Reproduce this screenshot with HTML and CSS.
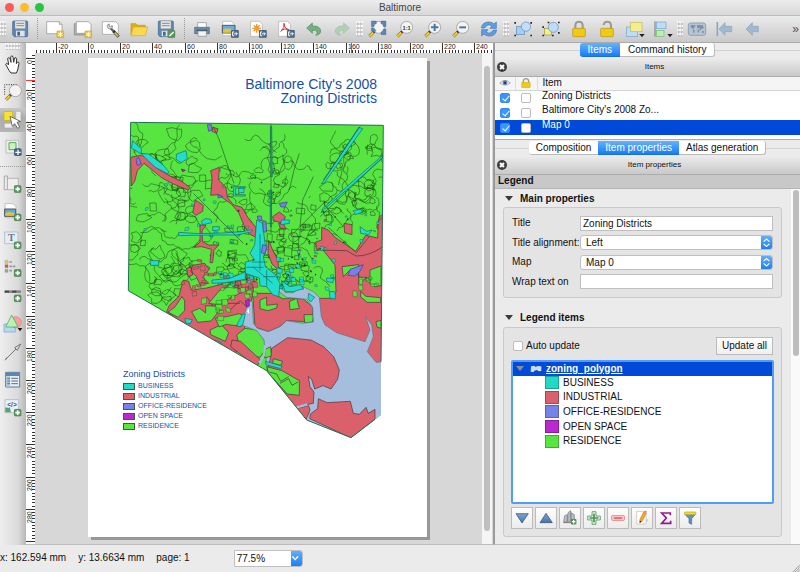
FILE: index.html
```html
<!DOCTYPE html>
<html lang="en">
<head>
<meta charset="utf-8">
<title>Baltimore</title>
<link rel="stylesheet" href="styles.css">
</head>
<body>
<svg class="defs" aria-hidden="true">
  <defs>
    <linearGradient id="steel" x1="0" y1="0" x2="0" y2="1"><stop offset="0" stop-color="#7da6cf"/><stop offset="1" stop-color="#4674a8"/></linearGradient>
    <symbol id="plus" viewBox="0 0 24 24"><rect x="1" y="1" width="22" height="22" rx="5" fill="#5b9460" stroke="#3f7546"/><path d="M12 5v14M5 12h14" stroke="#fff" stroke-width="5"/></symbol>
    <symbol id="star" viewBox="0 0 24 24"><rect x="1" y="1" width="22" height="22" rx="4" fill="#e3bd2c" stroke="#c49c17"/><path d="M12 4v16M5 8l14 8M19 8L5 16" stroke="#fff" stroke-width="3"/></symbol>
    <symbol id="export" viewBox="0 0 26 26"><rect x="1" y="1" width="24" height="24" rx="4" fill="#4d6a84" stroke="#36516a"/><path d="M11 7H6v12h5M10 13h10M16 8l5 5-5 5" fill="none" stroke="#fff" stroke-width="3"/></symbol>
    <symbol id="lens" viewBox="0 0 60 60"><path d="M20 39L7 52" stroke="#8a6d10" stroke-width="9"/><path d="M19 40L7 52" stroke="#f2cf35" stroke-width="6"/><path d="M24 35l-5 5" stroke="#333" stroke-width="8"/><circle cx="35" cy="25" r="18" fill="#f3f3f1" stroke="#8b8b8b" stroke-width="2"/></symbol>
    <symbol id="floppy" viewBox="0 0 60 60"><path d="M8 9q0-3 3-3h39q3 0 3 3v41q0 3-3 3H13l-5-5z" fill="#5f87b0" stroke="#3d6288" stroke-width="2"/><path d="M15 6h31v23H15z" fill="#e6e6e6" stroke="#888"/><path d="M19 13h23M19 20h23" stroke="#8c8c8c" stroke-width="3"/><path d="M18 35h26v17H18z" fill="#dfe3e8"/><path d="M22 38h8v12h-8z" fill="#45698e"/></symbol>
  </defs>
</svg>

<header class="titlebar">
  <div class="lights"><button class="light red" aria-label="Close"></button><button class="light amber" aria-label="Minimize"></button><button class="light green" aria-label="Zoom"></button></div>
  <h1>Baltimore</h1>
</header>

<nav class="toolbar" aria-label="Composer">
  <span class="grip first"></span>
  <button aria-label="Save"><svg viewBox="0 0 60 60"><use href="#floppy"/></svg></button>
  <span class="sep"></span>
  <button aria-label="New"><svg viewBox="0 0 60 60"><path d="M5 8h38l8 8v28H5z" fill="#fff" stroke="#8d8d8d" stroke-width="2"/><path d="M43 8v8h8" fill="#ddd" stroke="#8d8d8d" stroke-width="2"/><use href="#star" x="34" y="34" width="24" height="24"/></svg></button>
  <button aria-label="Duplicate"><svg viewBox="0 0 60 60"><path d="M4 14h44v34H4z" fill="#b5b5b5" stroke="#7d7d7d" stroke-width="2"/><path d="M10 8h36l8 8v27H10z" fill="#fff" stroke="#8d8d8d" stroke-width="2"/><use href="#star" x="34" y="34" width="24" height="24"/></svg></button>
  <button aria-label="Manage"><svg viewBox="0 0 60 60"><path d="M4 8h40l8 8v30H4z" fill="#fff" stroke="#999" stroke-width="2"/><path d="M28 27l11 11" stroke="#666" stroke-width="7"/><path d="M19 19q1-4 6-4l-1 6 5 3 4-5q4 6-2 10-7 2-11-3-2-3-1-7z" fill="#ddd" stroke="#666" stroke-width="2"/><path d="M37 36l16 17" stroke="#333" stroke-width="9"/><path d="M41 41l11 11" stroke="#e3c22f" stroke-width="5"/></svg></button>
  <button aria-label="Open"><svg viewBox="0 0 60 60"><path d="M6 48V14h15l4 5h24v9" fill="#dcae19" stroke="#c99812" stroke-width="2"/><path d="M6 50l7-26h43l-7 26z" fill="#f8d951" stroke="#dba91c" stroke-width="2"/></svg></button>
  <button aria-label="Save as template"><svg viewBox="0 0 60 60"><use href="#floppy" x="-4"/><rect x="32" y="34" width="22" height="22" rx="4" fill="#5b9460" stroke="#3f7546"/><path d="M37 51l13-12" stroke="#fff" stroke-width="4"/></svg></button>
  <span class="sep"></span>
  <button aria-label="Print"><svg viewBox="0 0 60 60"><path d="M17 11h26v16H17z" fill="#fff" stroke="#888" stroke-width="2"/><path d="M8 25h44v19H8z" fill="#6f8ca6" stroke="#49637b" stroke-width="2"/><path d="M14 34h32" stroke="#35516b" stroke-width="4"/><path d="M18 36h25v16H18z" fill="#f3f3f3" stroke="#888" stroke-width="2"/></svg></button>
  <button aria-label="Export as image"><svg viewBox="0 0 60 60"><path d="M8 7h26l9 9v34H8z" fill="#fff" stroke="#aaa" stroke-width="2"/><path d="M7 19h38v23H7z" fill="#69aee2" stroke="#555" stroke-width="3"/><path d="M9 32q14-8 34 2v7H9z" fill="#e4c33a"/><use href="#export" x="32" y="32" width="25" height="25"/></svg></button>
  <button aria-label="Export as SVG"><svg viewBox="0 0 60 60"><path d="M8 7h26l9 9v36H8z" fill="#fff" stroke="#aaa" stroke-width="2"/><g stroke="#ee9b36" stroke-width="4"><path d="M26 15v26M13 28h26M17 19l18 18M35 19L17 37"/><circle cx="26" cy="28" r="5" fill="#ee9b36"/></g><use href="#export" x="32" y="32" width="25" height="25"/></svg></button>
  <button aria-label="Export as PDF"><svg viewBox="0 0 60 60"><path d="M8 7h26l9 9v36H8z" fill="#fff" stroke="#aaa" stroke-width="2"/><path d="M24 12q4 13-10 26M24 14q1 16 16 18M16 34q9-7 22-2" fill="none" stroke="#d6302e" stroke-width="3"/><use href="#export" x="32" y="32" width="25" height="25"/></svg></button>
  <button aria-label="Undo"><svg viewBox="0 0 60 60"><path d="M8 27L25 12v9q24-1 25 15 0 11-15 13 6-6 4-11-3-5-14-4v9z" fill="#77ad80" stroke="#4f9160" stroke-width="2"/></svg></button>
  <button aria-label="Redo"><svg viewBox="0 0 60 60"><path d="M52 27L35 12v9q-24-1-25 15 0 11 15 13-6-6-4-11 3-5 14-4v9z" fill="#b2d0b7" stroke="#9cc0a3" stroke-width="2"/></svg></button>
  <span class="grip"></span>
  <button aria-label="Zoom full"><svg viewBox="0 0 60 60"><use href="#lens"/><g fill="#5b85b2" stroke="#3f6793"><path d="M13 6h15v8l-5 2-2 7h-8zM57 6H42v8l5 2 2 7h8zM57 47H42v-8l5-2 2-7h8zM13 36v-9h8l6 8-4 4z"/></g></svg></button>
  <button aria-label="Zoom to 100%"><svg viewBox="0 0 60 60"><use href="#lens"/><text x="35" y="32" class="one">1:1</text></svg></button>
  <button aria-label="Zoom in"><svg viewBox="0 0 60 60"><use href="#lens"/><path d="M35 14v22M24 25h22" stroke="#4676ab" stroke-width="6"/></svg></button>
  <button aria-label="Zoom out"><svg viewBox="0 0 60 60"><use href="#lens"/><path d="M25 25h20" stroke="#4676ab" stroke-width="6"/></svg></button>
  <button aria-label="Refresh"><svg viewBox="0 0 60 60"><path d="M7 27q3-19 24-18 9 1 14 6l7-6v19H33l6-7q-14-9-22 6zM53 33q-3 19-24 18-9-1-14-6l-7 6V32h19l-6 7q14 9 22-6z" fill="#609ce0" stroke="#3978bd" stroke-width="2"/></svg></button>
  <span class="grip narrow"></span>
  <button aria-label="Group"><svg viewBox="0 0 60 60"><rect x="10" y="23" width="24" height="24" fill="#a9cdf1" stroke="#5d8bb9" stroke-width="2"/><circle cx="39" cy="23" r="14" fill="#c3def7" stroke="#5d8bb9" stroke-width="2"/><path d="M4 9h5v5H4zM52 9h5v5h-5zM4 47h5v5H4zM52 47h5v5h-5z" fill="#222"/></svg></button>
  <button aria-label="Ungroup"><svg viewBox="0 0 60 60"><rect x="10" y="28" width="22" height="20" fill="#f4ee91" stroke="#989344" stroke-width="2"/><circle cx="37" cy="25" r="15" fill="#bcdcf7" stroke="#5d8bb9" stroke-width="2"/><path d="M4 22h5v5H4zM4 47h5v5H4zM33 47h5v5h-5zM20 8h5v5h-5zM51 8h5v5h-5zM51 39h5v5h-5z" fill="#222"/></svg></button>
  <button aria-label="Lock"><svg viewBox="0 0 60 60"><path d="M19 30V18q1-10 11-10t11 10v12" fill="none" stroke="#999" stroke-width="6"/><rect x="11" y="28" width="38" height="25" rx="3" fill="#f0cb15" stroke="#b98f0b" stroke-width="2"/></svg></button>
  <button aria-label="Unlock"><svg viewBox="0 0 60 60"><path d="M20 18q1-10 11-10t11 10v12" fill="none" stroke="#999" stroke-width="6"/><rect x="11" y="28" width="38" height="25" rx="3" fill="#f0cb15" stroke="#b98f0b" stroke-width="2"/></svg></button>
  <button aria-label="Raise"><svg viewBox="0 0 60 60"><rect x="4" y="24" width="34" height="28" fill="#bcdcf7" stroke="#7ba2c7" stroke-width="2"/><rect x="17" y="10" width="34" height="28" fill="#f4ee91" stroke="#c1ba50" stroke-width="2"/><path d="M43 45h16l-8 10z" fill="#222"/></svg></button>
  <button aria-label="Align"><svg viewBox="0 0 60 60"><path d="M6 7v46" stroke="#777" stroke-width="3"/><rect x="10" y="9" width="29" height="20" fill="#bcdcf7" stroke="#7ba2c7" stroke-width="2"/><rect x="10" y="34" width="23" height="18" fill="#b7f0b4" stroke="#78b975" stroke-width="2"/><path d="M43 45h16l-8 10z" fill="#222"/></svg></button>
  <span class="grip narrow"></span>
  <button aria-label="Preview atlas"><svg viewBox="0 0 60 60"><rect x="4" y="12" width="52" height="37" rx="7" fill="#b4c4d3" stroke="#8fa2b5" stroke-width="3"/><path d="M11 18l15 1-5 8-3 4-7-7zM18 32l5 1-2 10-3-3zM30 18l18 1 2 9-6 1-3 5-4-6-7-2zM32 30l6 3-3 9-3-3zM45 36l6 1-1 5-5-1z" fill="#7e90a3"/></svg></button>
  <button aria-label="First feature"><svg viewBox="0 0 60 60"><path d="M7 9v42" stroke="#8fa6bd" stroke-width="5"/><path d="M12 30l18-19v11h20v16H30v11z" fill="#a0b9d1" stroke="#8aa4be" stroke-width="2"/></svg></button>
  <button aria-label="Previous feature"><svg viewBox="0 0 60 60"><path d="M9 30l19-19v11h18v16H28v11z" fill="#a0b9d1" stroke="#8aa4be" stroke-width="2"/></svg></button>
  <button class="more" aria-label="More tools">»</button>
</nav>

<main class="work">
  <nav class="tools" aria-label="Items toolbar">
    <span class="grip wide"></span>
    <button aria-label="Pan"><svg viewBox="0 0 60 60"><path d="M18 49L8 31q2-6 9 1l-3-19q4-5 7 1l3 11-1-17q4-5 7 0l2 17 3-13q5-3 6 2l-1 15 3-5q5-1 5 4l-4 20-4 9H24z" fill="#fff" stroke="#333" stroke-width="3" stroke-linejoin="round"/></svg></button>
    <button aria-label="Zoom"><svg viewBox="0 0 60 60"><path d="M5 38V8h38" fill="none" stroke="#333" stroke-width="3" stroke-dasharray="3 4"/><use href="#lens" x="2" y="1"/></svg></button>
    <button class="active" aria-label="Select item"><svg viewBox="0 0 60 60"><rect x="3" y="5" width="26" height="26" fill="#f8e232" stroke="#c9b113" stroke-width="2"/><path d="M38 4h16v30H38zM4 40h26v14H4z" fill="#eee" stroke="#aaa" stroke-width="2"/><path d="M21 19l7 30 7-8 9 14 6-4-8-14 10-3z" fill="#fff" stroke="#333" stroke-width="2"/></svg></button>
    <button aria-label="Move content"><svg viewBox="0 0 60 60"><path d="M9 7h38v38H9z" fill="#eee" stroke="#aaa" stroke-width="2"/><path d="M18 14h21v21H18z" fill="#c7f6bd" stroke="#58a852" stroke-width="3"/><rect x="33" y="31" width="23" height="23" rx="5" fill="#426587"/><path d="M45 35v16M37 43h16" stroke="#fff" stroke-width="4"/></svg></button>
    <span class="sep"></span>
    <button aria-label="Add map"><svg viewBox="0 0 60 60"><path d="M13 13h33v34H15" fill="#eee" stroke="#999" stroke-width="2"/><path d="M4 6h9v41H4q-2 0 0-5z" fill="#eee" stroke="#888" stroke-width="2"/><use href="#plus" x="32" y="33" width="24" height="24"/></svg></button>
    <button aria-label="Add image"><svg viewBox="0 0 60 60"><path d="M6 5h24l9 9v33H6z" fill="#fff" stroke="#aaa" stroke-width="2"/><path d="M5 21h33v22H5z" fill="#5eabe2" stroke="#555" stroke-width="3"/><path d="M7 34q12-8 30 1v6H7z" fill="#e4c33a"/><use href="#plus" x="32" y="34" width="24" height="24"/></svg></button>
    <button aria-label="Add label"><svg viewBox="0 0 60 60"><path d="M5 6h40v35H5z" fill="#e5edf4" stroke="#9fadb9" stroke-width="2"/><text x="25" y="34" class="tee">T</text><use href="#plus" x="32" y="34" width="24" height="24"/></svg></button>
    <button aria-label="Add legend"><svg viewBox="0 0 60 60"><path d="M6 7h9v9H6z" fill="#ead435" stroke="#888"/><path d="M6 20h9v9H6z" fill="#db4e55" stroke="#888"/><path d="M6 34h9v9H6z" fill="#81b77d" stroke="#888"/><path d="M19 12h10M19 25h18M19 38h10" stroke="#999" stroke-width="5" stroke-dasharray="8 2"/><use href="#plus" x="32" y="33" width="24" height="24"/></svg></button>
    <button aria-label="Add scalebar"><svg viewBox="0 0 60 60"><path d="M4 13h50v8H4z" fill="#888"/><path d="M6 17h12M28 17h12" stroke="#444" stroke-width="5"/><use href="#plus" x="32" y="25" width="24" height="24"/></svg></button>
    <button aria-label="Add shape"><svg viewBox="0 0 60 60"><path d="M3 30h34v24H3z" fill="#b5d8f7" stroke="#78a3c7" stroke-width="2"/><circle cx="38" cy="25" r="17" fill="#f3a1a1" stroke="#d77" stroke-width="2"/><path d="M26 3L8 39h37z" fill="#baf0b5" stroke="#4e9f49" stroke-width="2"/><path d="M44 42h14l-7 10z" fill="#111"/></svg></button>
    <button aria-label="Add arrow"><svg viewBox="0 0 60 60"><path d="M8 52L42 18" stroke="#777" stroke-width="3"/><path d="M4 56l6-10 3 4z" fill="#777"/><path d="M53 6L35 17l8 8z" fill="#ddd" stroke="#777" stroke-width="3"/></svg></button>
    <button aria-label="Add attribute table"><svg viewBox="0 0 60 60"><path d="M8 7h42v44H8z" fill="#e8eef4" stroke="#557c9d" stroke-width="3"/><path d="M9 8h40v10H9z" fill="#5d86ab"/><path d="M9 19h12v31H9z" fill="#b0c7da"/><path d="M13 25h8M25 25h20M13 33h8M25 33h20M13 41h8M25 41h20" stroke="#58718a" stroke-width="3"/></svg></button>
    <button aria-label="Add HTML frame"><svg viewBox="0 0 60 60"><path d="M6 5h41v39H6z" fill="#eaf0f5" stroke="#9fadb9" stroke-width="2"/><path d="M7 29q13-3 17 14H7z" fill="#56a65f"/><path d="M12 35l8-8 3 10z" fill="#568fd2"/><text x="27" y="26" class="code">&lt;/&gt;</text><use href="#plus" x="32" y="32" width="24" height="24"/></svg></button>
  </nav>

  <section class="view" aria-label="Composition">
    <svg class="hruler" id="hruler" aria-hidden="true"></svg>
    <svg class="vruler" id="vruler" aria-hidden="true"></svg>
    <div class="canvas">
      <article class="paper">
        <h2 class="map-title">Baltimore City's 2008<br>Zoning Districts</h2>
        <svg class="map" viewBox="0 0 810 1020" role="img" aria-label="Zoning map of Baltimore City">
          <defs><clipPath id="city"><path d="M32 37L790 46 783 755 783 915 693 983 560 930 440 782 25 542z"/></clipPath></defs>
          <g clip-path="url(#city)">
            <path fill="#59e541" d="M20 30H800V1000H20z"/>
            <g id="parcels" fill="none" stroke="#173f14" stroke-width="2" stroke-opacity=".75" stroke-linejoin="round"></g>
            <g stroke="#46323a" stroke-width="2" stroke-linejoin="round">
              <g fill="#da606c">
                <path d="M32 142L62 136 92 146 114 176 150 198 184 214 210 232 204 240 160 222 126 204 104 186 72 160 52 182 44 214 34 228z"/>
                <path d="M272 182L298 172 296 210 318 232 322 262 340 284 366 292 386 326 408 352V382L388 372 372 346 356 308 334 282 314 268 296 254 272 256 276 206z"/>
                <path d="M226 270l24 16-2 18-20 12-10-8z"/>
                <path d="M240 345L258 345 246 363 248 395 266 405 296 405 282 421 278 458 270 458 274 418 244 410 222 412 240 396z"/>
                <path d="M218 466l36-6 14 18-20 24 18 18-26 4-12-26-16-14zM200 475l14-4 4 24-14 6zM278 52l16 4-4 14-14-6z"/>
                <path d="M458 320l20-14 18 14-6 20-30-8zM476 340l14 0 8 18-18-4z"/>
                <path d="M672 340l24 4 0 30-22-6zM778 320l12-8v70l-20-30z"/>
                <path d="M605 352L625 360 645 382 707 424 737 376 773 384 775 334 790 319V770H598V565H640L648 545 645 465 605 415 589 418 587 396 605 390z"/>
                <path d="M446 391L458 420 474 450 476 480 456 462 444 430z"/>
                <path d="M190 510L206 514 214 540 260 534 300 524 340 516 400 500V548L392 578 380 640 360 680 345 740 275 698 200 650 170 628 140 605 148 586 176 560z"/>
                <path d="M398 550H458L488 566H548L578 590V636L500 632 480 650 445 665 405 651z"/>
              </g>
              <path d="M590 420l90 2 28 16q40 2 90-34M300 560l24 20 36 0M330 600l30-28 30 26-8 14M260 560l20 30 44-20" fill="none"/>
              <g fill="#59e541">
                <path d="M186 560l8 12 0 30-20 20-30-16 20-14zM215 605l24-10 18 14 0-22 34 2 0 22-18 22-40 4zM270 660l34-16 22 24-10 26-44-20z"/>
                <path d="M286 625l38-6 34-8 20 10-16 28-44-6-20 8zM300 540l40-14 46 10-50 26-42 22-28-4z"/>
                <path d="M350 675L375 655 412 660 436 695 438 717 420 742 376 732 358 706z"/>
                <path d="M420 570l20-8 0 24 32-4-2 12-26 8-24-6zM508 575l22-10 8 30-28 4zM552 614l28 0-2 22-24 2z"/>
                <path d="M666 470l50-6 0 38 24 0-24 20 0-28-26-14-20 20zM722 545l16 14 44 4v14h-40l-20-16zM768 635l15-4v24l-12-4zM750 480l33-12v60l-33-6z"/>
              </g>
              <path fill="#a5bedd" stroke="#5f7187" d="M385 572L397 575 400 640 412 655 445 665 480 650 500 632 548 640 580 636 578 592 560 568 500 562 478 545 452 516 472 522 496 548 520 548 545 528 580 545 598 562 604 620 615 645 650 668 735 695 750 660 737 620 755 645 760 680 742 725 768 757 800 755V1000H555L545 925 560 900 520 830 440 760 432 690 410 662 365 645z"/>
              <g fill="#da606c">
                <path d="M455 715L503 683 573 690 611 710 641 740 658 780 653 808 633 837 609 827 584 837 575 808 565 800 570 830 582 846 580 880 540 888 520 894 490 860 440 782 450 750z"/>
                <path d="M595 866L621 878 691 874 700 910 718 913 738 892 745 910 765 898V928L693 984 569 926 571 912 593 896zM530 895L566 887 570 901 558 929z"/>
                <path d="M336 690L362 694 422 750 410 770 332 710z"/>
              </g>
              <g fill="#59e541">
                <path d="M440 770l46 12 52 30 0 44-36-4-56-62zM436 718l16-8 2 28-20 6zM460 746l28 8-6 12-24-6z"/>
                <path d="M448 786l22 6 12 22 24-14M480 820l26-14 10 20 18-10" fill="none"/>
              </g>
              <path fill="none" stroke="#a5bedd" stroke-width="7" d="M436 705l-4 30-14 25M528 893l34-10"/>
              <path fill="#fff" stroke="none" d="M381 605l5-10 2 16z"/>
            </g>
            <g id="lots"></g>
            <g fill="#22dccc" stroke="#176a66" stroke-width="2">
              <path d="M38 92l26 24 0 16-30-18zM64 130l22 2 40 30 20 22-2 8-38-20-34-32zM170 132l28-10 4 24-18 12-16-10z"/>
              <path d="M244 334l12-8 16 2 4 10-28 6zM340 230h36v4h-30v20h30v4h-36zM356 234h16v14h-16zM278 350l20 0 0 10-20 2zM90 452h26v14H92z"/>
              <path d="M176 367l60 4 70-2 60-4 30-6 0 6-46 10-80 0-94 2z"/>
              <path d="M410 330L428 340 432 374 438 422 430 440 436 470 466 494 480 520 476 560 458 554 440 530 420 528 418 504 376 490V456L404 450 390 430 404 404z"/>
              <path d="M484 512L510 530 540 524 550 536 520 545 496 545zM376 486l0 22-60 10-40 2 0-10 50-4zM450 240l4 0 1 110-4 0zM451 50h4l2 150h-4z"/>
              <path d="M716 52l12 4-78 110-38 54-8 2 44-66zM788 136v8l-90 80-88 76-6 8 4-12 88-80z"/>
              <path d="M700 302l22-4 6 8-22 8zM720 350l20 14 16-4-10 14-24-4zM350 646l18-34 8 0-8 34-10 4zM566 550l18 12-12 14-8-10zM628 545h18l0 22-16-2z"/>
              <path d="M484 330h24l0 10-26 4zM195 625l22 4-6 12-14-2zM284 690l20 8-4 6-18-6zM436 754l50 14-4 8-44-12zM620 504l22 2-4 12-18-4z"/>
            </g>
            <g fill="none" stroke="#176a66" stroke-width="2"><path d="M396 456h46M380 472h50M420 372v110M440 480v50M398 470l60 50M430 500h36"/></g>
            <g fill="#7b7ee8" stroke="#393f8b" stroke-width="2">
              <path d="M262 44l12 0 2 16-10 4zM48 148l8-6 8 20-12 4zM478 280l24-4-8 16-12-2zM412 318l12 0 2 14-12-2zM428 332l10 2 2 32-10 0zM428 404l14 4-8 24-10-4zM294 254l14 6-14 4zM690 478l40-14-10 20-16 14-20-2z"/>
            </g>
            <path fill="#b727ce" stroke="#5c1a66" stroke-width="2" d="M184 177l12 4-8 4zM376 572l12-4 0 20-8 4z"/>
            <path d="M453 40v330M280 50l18 40 30 90 14 40M220 250l60 60 90 90M610 210l110-160M600 320l190-180M625 352l84 76 40-50M520 370l50-50 40-40 60 70M580 200l-32 70-8 80M508 240l14-60 16-50" fill="none" stroke="#235a2b" stroke-width="2"/>
          </g>
          <path d="M783 755L790 46 32 37 25 542 440 782 560 930 693 983 765 928" fill="none" stroke="#1f7050" stroke-width="3"/>
        </svg>
        <section class="legend">
          <h3>Zoning Districts</h3>
          <ul>
            <li><i class="c-business"></i>BUSINESS</li>
            <li><i class="c-industrial"></i>INDUSTRIAL</li>
            <li><i class="c-office"></i>OFFICE-RESIDENCE</li>
            <li><i class="c-open"></i>OPEN SPACE</li>
            <li><i class="c-residence"></i>RESIDENCE</li>
          </ul>
        </section>
      </article>
      <div class="vscroll"><span></span></div>
    </div>
  </section>

  <aside class="docks">
    <div class="tabs"><button class="on">Items</button><button>Command history</button></div>
    <header class="dock-title"><button class="close" aria-label="Close items"><svg viewBox="0 0 12 12"><circle cx="6" cy="6" r="5" fill="#3d3d3d"/><path d="M4 4l4 4M8 4l-4 4" stroke="#fff" stroke-width="2"/></svg></button><h2>Items</h2></header>
    <table class="items">
      <thead><tr>
        <th><svg viewBox="0 0 36 30" aria-label="Visible"><path d="M2 15q16-16 32 0-16 13-32 0z" fill="#e5e9ee" stroke="#8a96a4" stroke-width="2"/><circle cx="18" cy="14" r="7" fill="#5f80a8"/><circle cx="18" cy="14" r="3" fill="#223"/></svg></th>
        <th><svg viewBox="0 0 36 30" aria-label="Locked"><path d="M10 15V9q1-7 8-7t8 7v6" fill="none" stroke="#999" stroke-width="4"/><rect x="5" y="13" width="26" height="16" rx="2" fill="#f0cb15" stroke="#b98f0b"/></svg></th>
        <th class="name">Item</th></tr></thead>
      <tbody>
        <tr><td><input type="checkbox" checked aria-label="Show Zoning Districts"></td><td><input type="checkbox" aria-label="Lock Zoning Districts"></td><td class="name">Zoning Districts</td></tr>
        <tr><td><input type="checkbox" checked aria-label="Show title"></td><td><input type="checkbox" aria-label="Lock title"></td><td class="name">Baltimore City's 2008 Zo...</td></tr>
        <tr class="sel"><td><input type="checkbox" checked aria-label="Show Map 0"></td><td><input type="checkbox" aria-label="Lock Map 0"></td><td class="name">Map 0</td></tr>
      </tbody>
    </table>
    <div class="tabs second"><button>Composition</button><button class="on">Item properties</button><button>Atlas generation</button></div>
    <header class="dock-title"><button class="close" aria-label="Close item properties"><svg viewBox="0 0 12 12"><circle cx="6" cy="6" r="5" fill="#3d3d3d"/><path d="M4 4l4 4M8 4l-4 4" stroke="#fff" stroke-width="2"/></svg></button><h2>Item properties</h2></header>
    <h2 class="kind">Legend</h2>
    <div class="scroller">
      <form class="props">
        <h3><i class="tri"></i>Main properties</h3>
        <div class="group fields">
          <label for="t">Title</label><input id="t" type="text" value="Zoning Districts">
          <label for="a">Title alignment:</label><span class="pick"><select id="a"><option>Left</option></select></span>
          <label for="m">Map</label><span class="pick"><select id="m"><option>Map 0</option></select></span>
          <label for="w">Wrap text on</label><input id="w" type="text">
        </div>
        <h3 class="lower"><i class="tri"></i>Legend items</h3>
        <div class="group entries">
          <div class="row"><label class="auto"><input type="checkbox">Auto update</label><button type="button" class="update">Update all</button></div>
          <div class="tree">
            <div class="layer"><i class="tri"></i><svg viewBox="0 0 36 24" aria-hidden="true"><path d="M3 4l10-2 4 4 6-3 11 1v14l-8 1-5-4-8 2-3 5-8-2z" fill="#cfdbe8"/></svg><span>zoning_polygon</span></div>
            <ul>
              <li><i class="c-business"></i>BUSINESS</li>
              <li><i class="c-industrial"></i>INDUSTRIAL</li>
              <li><i class="c-office"></i>OFFICE-RESIDENCE</li>
              <li><i class="c-open"></i>OPEN SPACE</li>
              <li><i class="c-residence"></i>RESIDENCE</li>
            </ul>
          </div>
          <div class="actions">
            <button type="button" aria-label="Move down"><svg viewBox="0 0 48 48"><path d="M6 11h37L24 39z" fill="url(#steel)" stroke="#24496f" stroke-width="2"/></svg></button>
            <button type="button" aria-label="Move up"><svg viewBox="0 0 48 48"><path d="M6 38h37L24 10z" fill="url(#steel)" stroke="#24496f" stroke-width="2"/></svg></button>
            <button type="button" aria-label="Add group"><svg viewBox="0 0 48 48"><path d="M5 35l3-18 8-3v22zM18 8l8-6v32h-9zM27 8l10 6v22H27z" fill="#b8c0c5" stroke="#6e767a" stroke-width="2"/><path d="M4 38h28" stroke="#777" stroke-width="3"/><use href="#plus" x="26" y="26" width="18" height="18"/></svg></button>
            <button type="button" aria-label="Add item"><svg viewBox="0 0 48 48"><path d="M18 5h12v13h13v12H30v13H18V30H5V18h13z" fill="#d9ecd9" stroke="#3e854a" stroke-width="2"/><path d="M24 11v26M11 24h26" stroke="#4c9357" stroke-width="5"/></svg></button>
            <button type="button" aria-label="Remove item"><svg viewBox="0 0 48 48"><rect x="5" y="17" width="38" height="14" rx="2" fill="#fbdcdc" stroke="#e55050" stroke-width="2"/><path d="M11 24h26" stroke="#ef5b5b" stroke-width="5"/></svg></button>
            <button type="button" aria-label="Edit item"><svg viewBox="0 0 48 48"><path d="M8 4h28v38H8z" fill="#fff" stroke="#bbb" stroke-width="2"/><path d="M36 26l8 4-8 8z" fill="#c5ccd6"/><path d="M29 6l8 4-12 23-8 5 1-10z" fill="#f4a92c" stroke="#c87f16" stroke-width="2"/><path d="M29 5l8 4 1-5-4-2z" fill="#e77c79"/><path d="M17 38l1-6 5 3z" fill="#222"/></svg></button>
            <button type="button" aria-label="Count features"><svg viewBox="0 0 48 48"><path d="M37 16V9H11l14 15-14 16h27v-8" fill="none" stroke="#8d1c8f" stroke-width="5"/></svg></button>
            <button type="button" aria-label="Filter"><svg viewBox="0 0 48 48"><path d="M8 12h33L29 26v17l-8-4V26z" fill="#6590be" stroke="#456c97" stroke-width="2"/><rect x="7" y="6" width="35" height="8" rx="3" fill="#eedb3e" stroke="#b8a41d" stroke-width="2"/></svg></button>
          </div>
        </div>
      </form>
      <div class="pscroll"><span></span></div>
    </div>
  </aside>
</main>

<footer class="status">
  <span>x: 162.594 mm</span><span>y: 13.6634 mm</span><span>page: 1</span>
  <span class="pick zoom"><select aria-label="Zoom level"><option>77.5%</option></select></span>
  <svg class="size-grip" viewBox="0 0 10 10" aria-hidden="true"><path d="M1 10l9-9M4 10l6-6M7 10l3-3" stroke="#888"/></svg>
</footer>
<script src="draw.js"></script>
</body>
</html>
```
FILE: styles.css
```css
* { box-sizing: border-box; }
html, body { margin: 0; }
body { display: flex; flex-direction: column; height: 100vh; overflow: hidden; background: #ebebeb; color: #111; font: 10px/14px "Liberation Sans", Arial, sans-serif; }
h1, h2, h3, ul { margin: 0; padding: 0; font: inherit; list-style: none; }
button, input, select { font: inherit; color: inherit; margin: 0; }
button { border: 0; padding: 0; background: none; }
svg { display: block; }
.defs { position: absolute; width: 0; height: 0; }

.titlebar { display: grid; grid-template-columns: 1fr auto 1fr; align-items: center; height: 16px; flex: none; background: linear-gradient(#ececec, #d8d8d8); border-bottom: 1px solid #bdbdbd; color: #444; }
.lights { display: flex; gap: 6px; padding-left: 5px; }
.light { width: 9px; height: 9px; border-radius: 50%; }
.red { background: #fb5b55; } .amber { background: #fdbb2e; } .green { background: #27c540; }

.toolbar { display: flex; align-items: center; height: 27px; flex: none; background: linear-gradient(#ebebeb, #c9c9c9); border-bottom: 1px solid #aaa; }
.toolbar button { width: 28px; height: 26px; display: grid; place-items: center; flex: none; }
.toolbar svg, .tools svg { width: 20px; height: 20px; overflow: visible; }
.toolbar .more { margin-left: auto; width: 9px; color: #555; font-size: 12px; }
.grip { width: 7px; height: 16px; flex: none; background: conic-gradient(#f8f8f8 25%, transparent 0 50%, #c4c4c4 0 75%, transparent 0) 1px 0 / 3px 4px; }
.grip.first, .grip.narrow { width: 6px; }
.sep { width: 7px; height: 22px; flex: none; background: linear-gradient(90deg, transparent 3px, #999 3px, #999 4px, transparent 4px); -webkit-mask: repeating-linear-gradient(#000 0 1px, transparent 1px 2px); mask: repeating-linear-gradient(#000 0 1px, transparent 1px 2px); }
.one { font: bold 17px "Liberation Sans", sans-serif; text-anchor: middle; fill: #333; }
.tee { font: bold 30px "Liberation Serif", serif; text-anchor: middle; fill: #68798a; }
.code { font: bold 20px "Liberation Sans", sans-serif; text-anchor: middle; fill: #555; }

.work { display: flex; flex: 1; min-height: 0; }
.tools { width: 26px; flex: none; display: flex; flex-direction: column; background: linear-gradient(90deg, #eee 0, #dadada 70%, #b6b6b6); }
.tools button { height: 28px; flex: none; display: grid; place-items: center; padding-right: 1px; }
.tools .active { background: linear-gradient(#c8c8c8, #adadad 40%, #b4b4b4); height: 24px; margin: 2px 0; }
.tools .sep { width: 25px; height: 8px; background: linear-gradient(transparent 4px, #999 4px, #999 5px, transparent 5px); -webkit-mask: repeating-linear-gradient(90deg, #000 0 1px, transparent 1px 2px); mask: repeating-linear-gradient(90deg, #000 0 1px, transparent 1px 2px); }
.grip.wide { width: 15px; height: 7px; margin-left: 5px; }

.view { flex: 1; min-width: 0; display: grid; grid-template: 10px 1fr / 9px 1fr; background: #fff; border-bottom: 1px solid #bbb; }
.hruler { grid-column: 2; width: 100%; height: 10px; overflow: hidden; }
.vruler { grid-row: 2; width: 9px; height: 100%; overflow: hidden; }
.hruler text, .vruler text { font: 7px "Liberation Sans", sans-serif; fill: #222; }
.canvas { grid-area: 2 / 2; display: flex; justify-content: space-between; background: #d7d7d7; overflow: hidden; min-height: 0; }
.paper { position: relative; flex: none; width: 339px; height: 479px; margin: 5px 0 0 53px; background: #fff; box-shadow: 3px 3px 0 #989898; }
.map-title { position: absolute; top: 19px; right: 50px; font-size: 14px; line-height: 14px; text-align: right; color: #1550a8; white-space: nowrap; }
.map { position: absolute; left: 32px; top: 52px; width: 270px; height: 340px; }
.legend { position: absolute; left: 35px; top: 309px; color: #1550a8; white-space: nowrap; }
.legend h3 { font-size: 9px; line-height: 14px; }
.legend ul { font-size: 7px; line-height: 10px; }
.legend li { display: flex; align-items: center; gap: 3px; }
.legend i { width: 12px; height: 7px; border: 1px solid #3c5c48; }
.c-business { background: #22d9c8; } .c-industrial { background: #da606c; } .c-office { background: #7782e6; } .c-open { background: #b929cf; } .c-residence { background: #59e541; }
.vscroll { width: 10px; margin-right: 1px; background: #f5f5f5; padding: 13px 2px; display: flex; }
.vscroll span { flex: 1; border-radius: 3px; background: #bfbfbf; }

.docks { width: 307px; flex: none; display: flex; flex-direction: column; border-left: 2px solid #9b9b9b; border-bottom: 1px solid #bbb; }
.tabs { display: flex; justify-content: center; height: 15px; flex: none; background: linear-gradient(transparent 7px, #d2d2d2 7px, #d2d2d2 8px, transparent 8px); }
.tabs button { height: 14px; line-height: 13px; padding: 0 8px; background: #fff; border-bottom: 1px solid #bbb; }
.tabs button:first-child { border-radius: 3px 0 0 3px; }
.tabs button:last-child { border-radius: 0 3px 3px 0; border-right: 1px solid #bbb; }
.tabs .on { background: linear-gradient(#67b1fb, #167df8); color: #fff; border-color: #1670df; }
.tabs.second { margin-top: 1px; }
.tabs.second button { padding: 0 7px; }
.dock-title { display: grid; grid-template-columns: 15px 1fr 1px; align-items: center; height: 19px; flex: none; background: linear-gradient(#ececec, #c9c9c9); border-bottom: 1px solid #adadad; }
.dock-title h2 { font-size: 8px; text-align: center; }
.close svg { width: 12px; height: 12px; margin-left: 1px; }
.items { border-collapse: collapse; width: 100%; height: 62px; flex: none; table-layout: fixed; background: #fff; border-bottom: 1px solid #aaa; }
.items th, .items td { padding: 0; font-weight: normal; line-height: 12px; height: 15px; text-align: left; vertical-align: middle; }
.items th { height: 13px; background: #f5f5f5; border-bottom: 1px solid #d5d5d5; border-right: 1px solid #ddd; }
.items th:first-child { width: 20px; } .items th:nth-child(2) { width: 22px; }
.items th svg { width: 12px; height: 10px; margin: auto; }
.items .name { padding-left: 5px; border-right: 0; }
.items td.name { vertical-align: top; line-height: 10px; }
.items td:not(.name) { text-align: center; }
.sel { background: #0049d9; color: #fff; }
.items tbody::after { content: ""; display: table-row; height: 4px; }
input[type=checkbox] { appearance: none; width: 10px; height: 10px; display: block; margin: 0 auto; background: #fff; border: 1px solid #bbb; border-radius: 2px; }
input[type=checkbox]:checked { border-color: #2f8af5; background: #3b95fa; position: relative; }
input[type=checkbox]:checked::after { content: ""; position: absolute; left: 3px; top: 0; width: 3px; height: 6px; border: solid #fff; border-width: 0 1px 1px 0; transform: rotate(40deg); }
.kind { height: 14px; line-height: 12px; flex: none; padding-left: 3px; font-weight: bold; background: #c8c8c8; border-bottom: 1px solid #b4b4b4; }

.scroller { display: flex; flex: 1; min-height: 0; overflow: hidden; }
.props { flex: 1; padding: 3px 9px 0 8px; }
.props h3 { display: flex; align-items: center; gap: 7px; padding-left: 2px; font-weight: bold; height: 14px; }
.props h3.lower { margin-top: 13px; }
.tri { border: 4px solid transparent; border-top: 5px solid #3b3b3b; border-bottom: 0; }
.group { border: 1px solid #c9c9c9; border-radius: 3px; background: #e4e4e4; }
.fields { margin-top: 1px; height: 91px; padding: 8px 8px 7px 8px; display: grid; grid-template-columns: 68px 1fr; align-items: center; gap: 4px 0; }
.fields label { white-space: nowrap; }
.fields input, .pick { height: 15px; width: 100%; background: #fff; border: 1px solid #bfbfbf; padding: 0 2px; }
.pick { display: block; position: relative; border-radius: 3px; padding: 0; overflow: hidden; }
.pick select { appearance: none; display: block; width: 100%; height: 13px; border: 0; background: none; padding: 0 16px 0 5px; line-height: 13px; outline: 0; }
.pick::before { content: ""; position: absolute; right: -1px; top: -1px; bottom: -1px; width: 12px; background: linear-gradient(#67b1fb, #167df8); }
.pick::after { content: ""; position: absolute; right: 2px; top: 2px; width: 7px; height: 9px; background: linear-gradient(#fff, #fff); clip-path: polygon(0 35%, 50% 0, 100% 35%, 80% 40%, 50% 17%, 20% 40%, 0 35%, 0 65%, 20% 60%, 50% 83%, 80% 60%, 100% 65%, 50% 100%, 0 65%); }
.entries { margin-top: 2px; padding: 9px 7px 7px 7px; }
.row { display: flex; justify-content: space-between; align-items: center; height: 18px; padding: 0 1px 0 2px; }
.auto { display: flex; align-items: center; gap: 3px; }
.update { height: 18px; width: 57px; background: linear-gradient(#fff, #efefef); border: 1px solid #bbb; }
.tree { margin-top: 5px; height: 144px; background: #fff; border: 2px solid #509df7; border-radius: 2px; }
.layer { display: flex; align-items: center; height: 14px; padding-left: 3px; background: #0049d9; color: #fff; font-weight: bold; text-decoration: underline; }
.layer .tri { border-top-color: #8b8f91; margin-right: 6px; }
.layer svg { width: 12px; height: 8px; margin-right: 4px; }
.tree ul { display: flex; flex-direction: column; height: 73px; }
.tree li { flex: 1; display: flex; align-items: center; gap: 4px; padding-left: 32px; }
.tree li i { width: 14px; height: 13px; border: 1px solid rgba(0, 0, 0, .25); }
.actions { display: flex; gap: 2px; padding: 3px 0 0 0; }
.actions button { width: 22px; height: 22px; display: grid; place-items: center; background: linear-gradient(#fdfdfd, #ececec); border: 1px solid #bbb; }
.actions svg { width: 16px; height: 16px; }
.pscroll { width: 9px; background: #fafafa; padding: 1px 1px 0 2px; }
.pscroll span { display: block; height: 47%; border-radius: 3px; background: #bdbdbd; }

.status { display: flex; align-items: center; gap: 12px; height: 27px; flex: none; padding-bottom: 1px; position: relative; }
.status > .pick.zoom { width: 69px; height: 17px; margin-left: 32px; border-radius: 0 3px 3px 0; }
.zoom select { height: 15px; padding-left: 2px; }
.zoom::after { right: 3px; top: -1px; height: 11px; clip-path: polygon(0 65%, 20% 60%, 50% 83%, 80% 60%, 100% 65%, 50% 100%); }
.size-grip { width: 8px; height: 8px; margin-left: auto; align-self: flex-end; margin-bottom: -1px; }
```
FILE: draw.js
```js
const NS = "http://www.w3.org/2000/svg";
function add(parent, name, attrs, text) {
  const node = document.createElementNS(NS, name);
  for (const key in attrs) node.setAttribute(key, attrs[key]);
  if (text !== undefined) node.textContent = text;
  parent.appendChild(node);
}

// Rulers: 20 mm between labels, a tick every 2 mm.
const STEP = 32.2;
function ruler(id, zero, marker, vertical) {
  const svg = document.getElementById(id);
  const box = svg.getBoundingClientRect();
  const end = vertical ? box.height : box.width;
  let minor = "", major = "";
  for (let i = -20; zero + i * STEP / 10 < end; i++) {
    const p = Math.round(zero + i * STEP / 10);
    if (p < 0) continue;
    if (i % 10 === 0) {
      major += vertical ? `M0 ${p}.5h9` : `M${p}.5 0v10`;
      const label = String(i * 2);
      if (p + 2 + label.length * 4 > end) continue;
      if (vertical) add(svg, "text", { transform: `translate(6 ${p + 2 + label.length * 4}) rotate(-90)` }, label);
      else add(svg, "text", { x: p + 2, y: 6 }, label);
    } else {
      minor += vertical ? `M6 ${p}.5h3` : `M${p}.5 7v3`;
    }
  }
  add(svg, "path", { d: minor + major, stroke: "#333" });
  add(svg, "path", { d: vertical ? `M0 ${marker}.5h9` : `M${marker}.5 0v10`, stroke: "#f33" });
}
ruler("hruler", 53, 316, false);
ruler("vruler", 5, 27, true);

// Parcel boundaries and small lots, from a fixed seed so every load is the same.
let seed = 2008;
function rnd(a, b) {
  seed = (seed * 1664525 + 1013904223) % 4294967296;
  return a + (b - a) * seed / 4294967296;
}
function wander(x, y, steps, size) {
  let d = `M${x | 0} ${y | 0}`, angle = rnd(0, 6.3);
  for (let i = 0; i < steps; i++) {
    angle += rnd(-1.1, 1.1);
    x += Math.cos(angle) * size;
    y += Math.sin(angle) * size;
    d += `L${x | 0} ${y | 0}`;
  }
  return d;
}
// A closed, irregular outline around a centre.
function loop(x, y, size) {
  const n = 7 + (rnd(0, 6) | 0);
  let d = "";
  for (let i = 0; i < n; i++) {
    const r = size * rnd(.45, 1.1), a = i / n * 6.283;
    d += `${i ? "L" : "M"}${(x + Math.cos(a) * r) | 0} ${(y + Math.sin(a) * r * .8) | 0}`;
  }
  return d + "z";
}
function block(x, y, size) {
  const w = rnd(size / 2, size), h = rnd(size / 3, size), k = rnd(-4, 4);
  return `M${x | 0} ${y | 0}l${w | 0} ${k | 0}l${rnd(-3, 3) | 0} ${h | 0}l${-w | 0} ${-k | 0}z`;
}
const parcels = document.getElementById("parcels");
let lines = "";
[[35, 50, 240, 500, 30, 28], [320, 180, 420, 330, 7, 14], [450, 60, 500, 330, 11, 12],
 [600, 80, 780, 330, 21, 18], [60, 460, 200, 580, 6, 20], [260, 330, 600, 530, 17, 14]].forEach(([x0, y0, x1, y1, n, r]) => {
  for (let i = 0; i < n; i++) {
    lines += wander(rnd(x0, x1), rnd(y0, y1), rnd(8, 16), rnd(7, 13));
    lines += loop(rnd(x0, x1), rnd(y0, y1), rnd(r * .6, r * 1.3));
  }
});
[[280, 350, 600, 530, 40], [60, 120, 260, 400, 8], [470, 280, 620, 400, 10]].forEach(([x0, y0, x1, y1, n]) => {
  for (let i = 0; i < n; i++) lines += block(rnd(x0, x1), rnd(y0, y1), 26);
});
add(parcels, "path", { d: lines });

const lots = document.getElementById("lots");
const groups = [
  ["#22dccc", 280, 480, 400, 530, 18, 16], ["#22dccc", 470, 440, 540, 540, 18, 16],
  ["#22dccc", 520, 400, 640, 545, 14, 12], ["#22dccc", 180, 340, 400, 400, 14, 12],
  ["#da606c", 300, 490, 410, 540, 16, 18], ["#da606c", 180, 440, 300, 560, 12, 16],
  ["#59e541", 300, 500, 400, 560, 14, 20], ["#59e541", 180, 560, 340, 620, 8, 20],
  ["#da606c", 470, 300, 620, 440, 10, 8], ["#22dccc", 40, 120, 350, 400, 8, 9],
  ["#12301a", 300, 390, 600, 520, 46, 5], ["#12301a", 220, 200, 760, 400, 16, 5],
  ["#59e541", 690, 500, 775, 545, 8, 20], ["#22dccc", 620, 290, 780, 400, 8, 10]
];
groups.forEach(([fill, x0, y0, x1, y1, n, size]) => {
  let d = "";
  for (let i = 0; i < n; i++) d += block(rnd(x0, x1), rnd(y0, y1), size);
  add(lots, "path", { d, fill, stroke: "#1b4420", "stroke-width": 1 });
});
```
